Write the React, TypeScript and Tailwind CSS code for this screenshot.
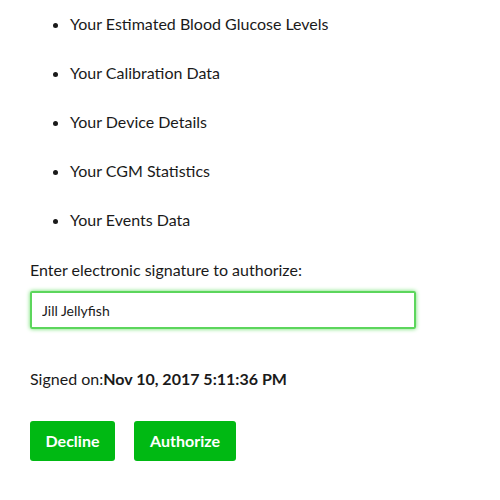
export default function App() {
  const items = [
    'Your Estimated Blood Glucose Levels',
    'Your Calibration Data',
    'Your Device Details',
    'Your CGM Statistics',
    'Your Events Data',
  ]

  return (
    <div className="w-[500px] h-[500px] bg-white text-[#1a1a1a] font-['Lato',sans-serif] overflow-hidden">
      <div className="pl-[30px] pt-[14px]">
        <ul className="list-disc pl-[40px] flex flex-col gap-[29px] text-[16px] leading-[20px]">
          {items.map((item) => (
            <li key={item}>{item}</li>
          ))}
        </ul>

        <p className="mt-[30px] text-[16px] leading-[20px]">Enter electronic signature to authorize:</p>

        <input
          type="text"
          defaultValue="Jill Jellyfish"
          className="mt-[11px] w-[386px] h-[38px] px-[10px] text-[14px] border-2 border-[#5cd65c] shadow-[0_0_4px_#66dd66] rounded-[2px] outline-none"
        />

        <p className="mt-[40px] text-[16px] leading-[20px]">
          Signed on:<span className="font-bold">Nov 10, 2017 5:11:36 PM</span>
        </p>

        <div className="mt-[32px] flex gap-[19px]">
          <button className="w-[85px] h-[40px] rounded-[3px] bg-[#00b913] text-white text-[16px] font-bold">
            Decline
          </button>
          <button className="w-[102px] h-[40px] rounded-[3px] bg-[#00b913] text-white text-[16px] font-bold">
            Authorize
          </button>
        </div>
      </div>
    </div>
  )
}
